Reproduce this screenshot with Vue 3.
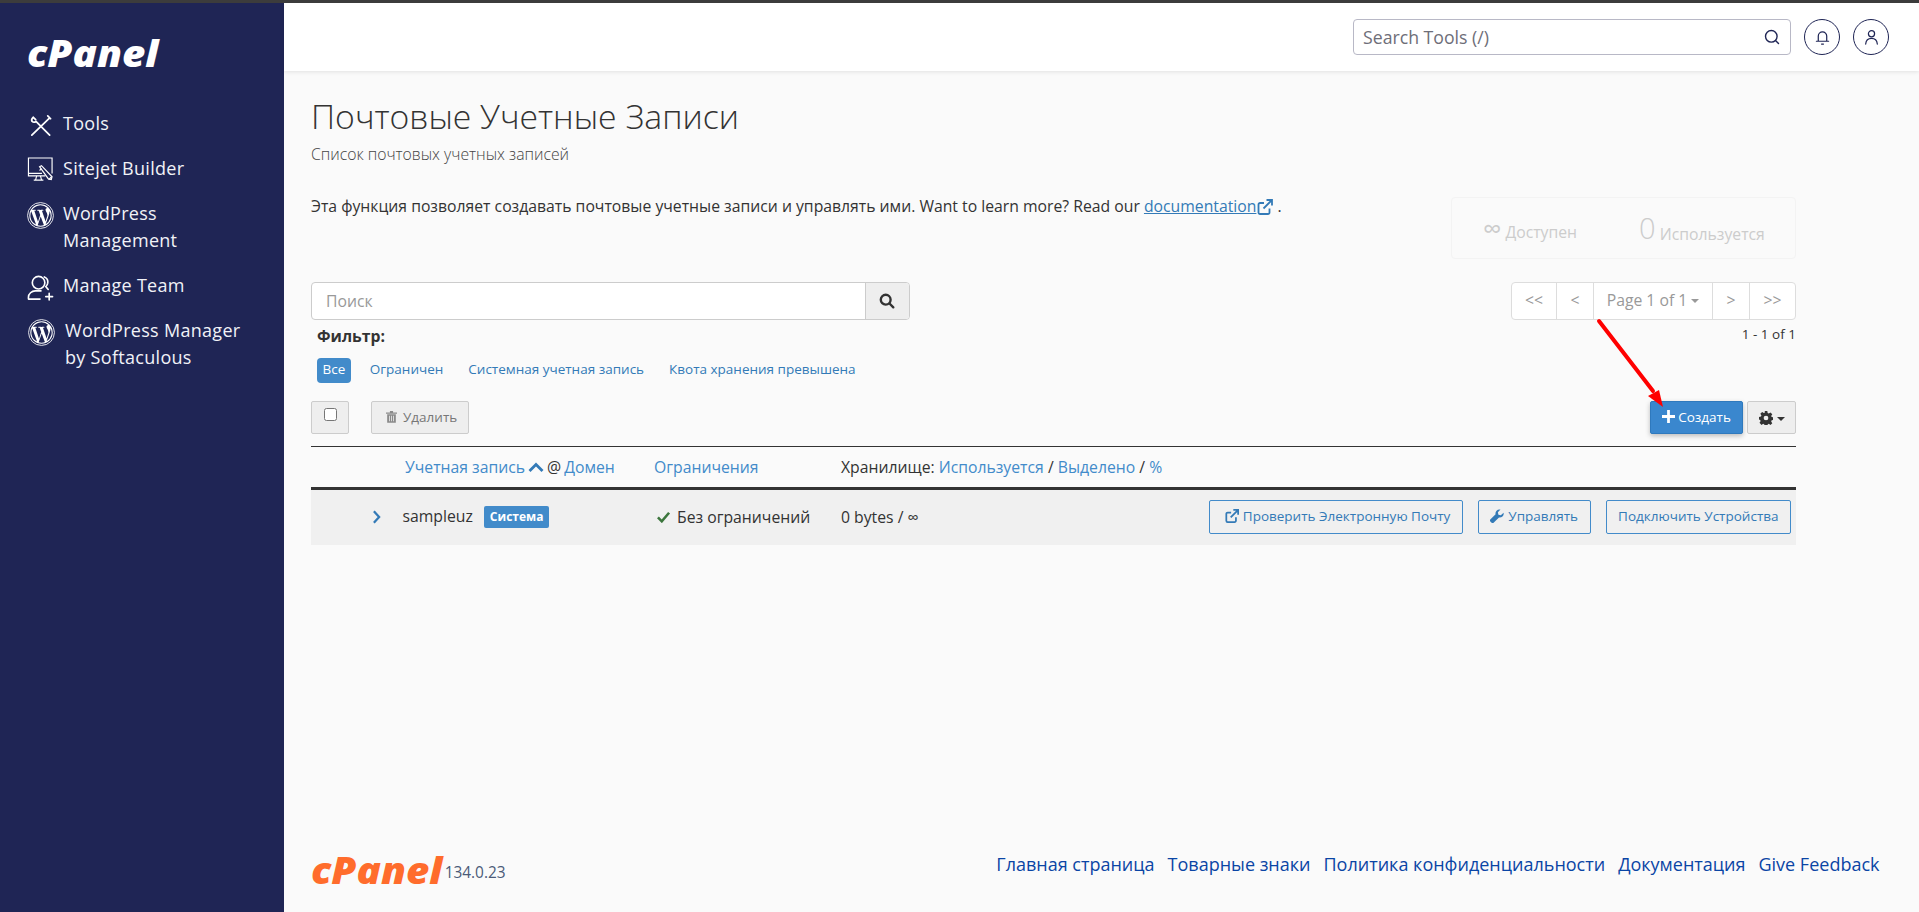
<script setup>
const nav = [
  { id: 'tools', label: 'Tools', icon: 'tools' },
  { id: 'sitejet', label: 'Sitejet Builder', icon: 'sitejet' },
  { id: 'wpm', label: 'WordPress Management', icon: 'wp' },
  { id: 'team', label: 'Manage Team', icon: 'team' },
  { id: 'soft', label: 'WordPress Manager by Softaculous', icon: 'wp', shift: true },
]
const footerLinks = ['Главная страница', 'Товарные знаки', 'Политика конфиденциальности', 'Документация', 'Give Feedback']
const filters = ['Ограничен', 'Системная учетная запись', 'Квота хранения превышена']
</script>

<template>
  <div class="page">
    <aside class="sidebar">
      <div class="logo">cPanel</div>
      <nav class="nav">
        <a v-for="item in nav" :key="item.id" class="nav-item" :class="[item.id, { shift: item.shift }]">
          <span class="nav-icon">
            <svg v-if="item.icon === 'tools'" viewBox="0 0 28 28" width="27" height="27" fill="none" stroke="#fff" stroke-width="1.800" stroke-linecap="round">
              <path d="M5 24 23 6.500M21.500 4l3 3" />
              <path d="M6.500 5.500c-1.600 1.400-2 3-1.200 4.300 1.200 1 2.600 1 4 0L23.500 24" />
              <path d="M6.500 5.500 9 8" />
            </svg>
            <svg v-else-if="item.icon === 'sitejet'" viewBox="0 0 28 28" width="27" height="27" fill="none" stroke="#fff" stroke-width="1.200">
              <path d="M19 19.500H1.500V1H26v16" />
              <path d="M1.500 17h14M10 19.500l-1 4M14 19.500l1 4M7 24h10" />
              <path d="M13 10l2-1 11 11.500-.8 3-3-.8z" fill="#1f2555" />
              <path d="M15 12l-2 2M22.500 23.500l3-3" />
            </svg>
            <svg v-else-if="item.icon === 'wp'" viewBox="0 0 28 28" width="27" height="27">
              <circle cx="14" cy="14" r="13.400" fill="none" stroke="#fff" stroke-width=".9" />
              <circle cx="14" cy="14" r="11.600" fill="#fff" />
              <path fill="#1f2555" d="M3.500 14c0 4.100 2.400 7.700 5.900 9.400L4.400 9.700A10.500 10.500 0 0 0 3.500 14zm17.600-.5c0-1.300-.5-2.200-.9-2.900-.5-.9-1-1.600-1-2.500 0-1 .8-1.900 1.800-1.900h.1A10.500 10.500 0 0 0 5.200 8.200h.7c1.100 0 2.800-.1 2.800-.1.600 0 .6.800.1.900 0 0-.6.100-1.200.1l3.800 11.300 2.300-6.800-1.600-4.500c-.6 0-1.100-.1-1.100-.1-.6 0-.5-.9 0-.9 0 0 1.700.1 2.800.1s2.800-.1 2.800-.1c.6 0 .6.800.1.900 0 0-.6.100-1.200.1l3.800 11.200 1-3.500c.5-1.400.9-2.400.9-3.300zM14.200 15l-3.100 9.100a10.500 10.500 0 0 0 6.500-.2l-.1-.1zm9-6c.1.300.1.700.1 1.100 0 1.100-.2 2.300-.8 3.800l-3.200 9.200A10.500 10.500 0 0 0 23.200 9z" />
            </svg>
            <svg v-else viewBox="0 0 28 28" width="27" height="27" fill="none" stroke="#fff" stroke-width="1.700" stroke-linecap="round">
              <circle cx="12" cy="9" r="6.500" />
              <path d="M18 3c2.500 1 4 3.500 3.500 6.500-.3 1.500-1 2.700-2 3.500l2.500 3" />
              <path d="M1.500 25.500v-1.500c0-3.500 3.500-6.500 7-6.500h6M1.500 26h12M23 20v7M19.500 23.500h7" />
            </svg>
          </span>
          <span class="nav-label">{{ item.label }}</span>
        </a>
      </nav>
    </aside>

    <div class="main">
      <header class="topbar">
        <div class="tool-search">
          <span class="tool-placeholder">Search Tools (/)</span>
          <svg viewBox="0 0 16 16" width="16" height="16" fill="none" stroke="#1f2555" stroke-width="1.400" stroke-linecap="round">
            <circle cx="7.300" cy="7.300" r="5.800" /><path d="M11.500 11.500l3 3" />
          </svg>
        </div>
        <button class="round-btn" aria-label="Notifications">
          <svg viewBox="0 0 16 18" width="15" height="17" fill="none" stroke="#1f2555" stroke-width="1.300" stroke-linecap="round">
            <path d="M1.500 13h13M3.500 13V7.500a4.500 4.500 0 0 1 9 0V13M7 16h2" />
          </svg>
        </button>
        <button class="round-btn" aria-label="User">
          <svg viewBox="0 0 16 18" width="15" height="17" fill="none" stroke="#1f2555" stroke-width="1.300" stroke-linecap="round">
            <circle cx="8" cy="5" r="3.300" /><path d="M1.800 16c.3-3.500 2.800-6 6.200-6s5.900 2.500 6.200 6" />
          </svg>
        </button>
      </header>

      <main class="content">
        <h1 class="title">Почтовые Учетные Записи</h1>
        <p class="subtitle">Список почтовых учетных записей</p>

        <div class="intro">
          <p class="intro-text">
            Эта функция позволяет создавать почтовые учетные записи и управлять ими. Want to learn more? Read our
            <a class="doc-link">documentation</a>
            <svg class="ext" viewBox="0 0 16 16" width="16" height="16" fill="none" stroke="#337ab7" stroke-width="1.800">
              <path d="M12.500 9.500v4a1.500 1.500 0 0 1-1.500 1.500H3a1.500 1.500 0 0 1-1.500-1.500V5.500A1.500 1.500 0 0 1 3 4h4" />
              <path d="M6.500 9.500 14.500 1.500M9.500 1h5.500v5.500" />
            </svg>
            .
          </p>
          <div class="stats">
            <span class="stat"><span class="stat-inf">∞</span> Доступен</span>
            <span class="stat"><span class="stat-num">0</span> Используется</span>
          </div>
        </div>

        <div class="search-row">
          <div class="search-box">
            <span class="search-input">Поиск</span>
            <span class="search-btn">
              <svg viewBox="0 0 16 16" width="16" height="16" fill="none" stroke="#333" stroke-width="2.400" stroke-linecap="round">
                <circle cx="6.700" cy="6.700" r="4.900" /><path d="M10.500 10.500l3.800 3.800" />
              </svg>
            </span>
          </div>
          <div class="pager-wrap">
            <div class="pager">
              <span class="pg w45">&lt;&lt;</span>
              <span class="pg w37">&lt;</span>
              <span class="pg w119">Page 1 of 1<i class="caret"></i></span>
              <span class="pg w37">&gt;</span>
              <span class="pg w46">&gt;&gt;</span>
            </div>
            <div class="pager-info">1 - 1 of 1</div>
          </div>
        </div>

        <div class="filter-label">Фильтр:</div>
        <div class="filters">
          <span class="pill">Все</span>
          <a v-for="f in filters" :key="f" class="filter">{{ f }}</a>
        </div>

        <div class="actions">
          <span class="btn-check"><i class="box"></i></span>
          <span class="btn-del">
            <svg viewBox="0 0 14 16" width="11" height="13" fill="#8a8a8a">
              <path d="M0 3h14v1.500H0zM5 1h4v2H5zM1.500 5h11v11h-11zM4 7v7h1V7zm2.500 0v7h1V7zM9 7v7h1V7z" fill-rule="evenodd" />
            </svg>
            Удалить
          </span>
          <span class="spacer"></span>
          <span class="btn-create">
            <svg viewBox="0 0 14 14" width="13" height="13" fill="#fff"><path d="M5.500 0h3v5.500H14v3H8.500V14h-3V8.500H0v-3h5.500z" /></svg>
            Создать
          </span>
          <span class="btn-gear">
            <svg viewBox="0 0 16 16" width="14" height="14">
              <path fill="#333" fill-rule="evenodd" d="M6.500 0h3l.4 2.200 1.300.6 1.900-1.200 2.100 2.100-1.300 1.900.6 1.300 2.200.4v3l-2.200.4-.6 1.300 1.300 1.900-2.100 2.100-1.900-1.300-1.300.6-.4 2.200h-3l-.4-2.200-1.300-.6-1.900 1.300L.600 13.400l1.300-1.900-.6-1.300L0 9.800v-3l2.200-.4.600-1.300L1.500 3.200l2.100-2.100 1.900 1.200 1.300-.6zM8 5.300a2.700 2.700 0 1 0 0 5.400 2.700 2.700 0 0 0 0-5.400z" />
            </svg>
            <i class="caret dark"></i>
          </span>
        </div>

        <div class="thead">
          <div class="c-name">
            <a>Учетная запись</a>
            <svg viewBox="0 0 16 10" width="16" height="10" fill="none" stroke="#337ab7" stroke-width="2.800"><path d="M1.500 9 8 2.500 14.500 9" /></svg>
            <span>@</span>
            <a>Домен</a>
          </div>
          <div class="c-limit"><a>Ограничения</a></div>
          <div class="c-store">Хранилище: <a>Используется</a> / <a>Выделено</a> / <a>%</a></div>
        </div>

        <div class="row">
          <span class="c-toggle">
            <svg viewBox="0 0 10 16" width="9" height="14" fill="none" stroke="#337ab7" stroke-width="2.600"><path d="M2 1.500 8 8l-6 6.500" /></svg>
          </span>
          <div class="r-name">
            <span>sampleuz</span>
            <span class="badge">Система</span>
          </div>
          <div class="r-limit">
            <svg viewBox="0 0 16 14" width="17" height="12" fill="none" stroke="#3c763d" stroke-width="3"><path d="M1.500 7.500 6 12 14.500 2" /></svg>
            Без ограничений
          </div>
          <div class="r-store">0 bytes / ∞</div>
          <div class="r-actions">
            <a class="outline check-mail">
              <svg viewBox="0 0 16 16" width="14" height="14" fill="none" stroke="#337ab7" stroke-width="2">
                <path d="M12.500 9.500v4a1.500 1.500 0 0 1-1.500 1.500H3a1.500 1.500 0 0 1-1.500-1.500V5.500A1.500 1.500 0 0 1 3 4h4" />
                <path d="M6.500 9.500 14.500 1.500M9.500 1h5.500v5.500" />
              </svg>
              Проверить Электронную Почту
            </a>
            <a class="outline">
              <svg viewBox="0 0 16 16" width="14" height="14" fill="#337ab7">
                <path d="M15.500 4.200c.4 1.600-.1 3.300-1.300 4.400-1.100 1-2.500 1.400-3.900 1.100L4.400 15.500a1.900 1.900 0 0 1-2.800 0l-1-1a1.900 1.900 0 0 1 0-2.800L6.400 6C6 4.500 6.400 3 7.500 1.900 8.700.700 10.400.200 12 .700L9 3.700l.6 2.800 2.800.6z" />
              </svg>
              Управлять
            </a>
            <a class="outline">Подключить Устройства</a>
          </div>
        </div>

        <svg class="arrow" viewBox="0 0 74 94" width="74" height="94">
          <path d="M4 4 58 74" stroke="#f00" stroke-width="4" stroke-linecap="round" fill="none" />
          <path d="M68 90 53 79 64 73z" fill="#f00" />
        </svg>
      </main>

      <footer class="footer">
        <div class="foot-brand">
          <span class="logo-foot">cPanel</span>
          <span class="version">134.0.23</span>
        </div>
        <div class="foot-links">
          <a v-for="l in footerLinks" :key="l">{{ l }}</a>
        </div>
      </footer>
    </div>
  </div>
</template>

<style>
html, body { margin: 0; padding: 0; background: #fafafa; }
</style>

<style scoped>
* { box-sizing: border-box; }
.page {
  display: flex;
  height: 912px;
  overflow: hidden;
  border-top: 3px solid #3c3c3c;
  font-family: "Open Sans", "Noto Sans", sans-serif;
  font-size: 15.750px;
  color: #333;
  background: #fafafa;
}
.sidebar {
  width: 284px;
  flex: none;
  background: #1f2555;
  color: #fff;
  padding: 31px 0 0 27px;
}
.logo, .logo-foot {
  display: block;
  font-family: "Open Sans", sans-serif;
  font-weight: 800;
  font-style: italic;
  font-size: 37px;
  line-height: 37px;
  transform: scaleX(1.09);
  transform-origin: left center;
}
.logo { height: 38px; }
.nav { margin-top: 37.500px; display: flex; flex-direction: column; }
.nav-item { display: flex; gap: 9px; margin-bottom: 18px; color: #f1f2f7; font-size: 18px; line-height: 27px; letter-spacing: .3px; }
.nav-item.shift { padding-left: 1px; gap: 10px; }
.nav-icon { width: 27px; height: 27px; margin: 2px 0 -2px; flex: none; display: block; }
.nav-icon svg { display: block; }
.nav-label { flex: 1; padding-right: 28px; }

.main { flex: 1; min-width: 0; display: flex; flex-direction: column; }
.topbar {
  height: 68px;
  flex: none;
  background: #fff;
  box-shadow: 0 1px 4px rgba(0, 0, 0, .1);
  display: flex;
  align-items: center;
  justify-content: flex-end;
  gap: 13px;
  padding: 0 30px 0 0;
  position: relative;
}
.tool-search {
  width: 438px;
  height: 36px;
  border: 1px solid #b8b8c6;
  border-radius: 4px;
  display: flex;
  align-items: center;
  justify-content: space-between;
  padding: 0 10px 0 9px;
}
.tool-placeholder { font-size: 17.700px; color: #6e6e78; }
.round-btn {
  width: 36px;
  height: 36px;
  padding: 0;
  background: #fff;
  border: 1px solid #1f2555;
  border-radius: 50%;
  display: flex;
  align-items: center;
  justify-content: center;
}

.content { position: relative; flex: 1; padding: 23px 123px 0 27px; }
.title { margin: 0; font-weight: 300; font-size: 33.750px; line-height: 44px; color: #333; }
.subtitle { margin: 6px 0 0; font-weight: 300; line-height: 20px; color: #444; }
.intro { display: flex; justify-content: space-between; margin-top: 33px; height: 85px; }
.intro-text { margin: -1px 0 0; line-height: 20px; }
.doc-link { color: #337ab7; text-decoration: underline; }
.ext { vertical-align: -3px; margin-left: 1px; }
.stats {
  width: 345px;
  height: 62px;
  border: 1px solid #f3f3f3;
  border-radius: 4px;
  display: flex;
  align-items: center;
  gap: 62px;
  padding: 1px 0 0 31px;
  color: #ccc;
}
.stat { white-space: nowrap; }
.stat-inf { font-size: 26px; line-height: 1; }
.stat-num { font-size: 29px; font-weight: 300; line-height: 1; vertical-align: 1px; }

.search-row { display: flex; justify-content: space-between; align-items: flex-start; }
.search-box {
  width: 598.500px;
  height: 38px;
  border: 1px solid #ccc;
  border-radius: 4px;
  background: #fff;
  display: flex;
  align-items: stretch;
}
.search-input { flex: 1; padding: 8px 14px; line-height: 20px; color: #999; }
.search-btn { width: 44px; border-left: 1px solid #ccc; background: #eee; border-radius: 0 3px 3px 0; display: flex; align-items: center; justify-content: center; }
.pager-wrap { text-align: right; }
.pager { display: flex; height: 38px; border: 1px solid #ddd; border-radius: 4px; background: #fff; color: #999; }
.pg { display: flex; align-items: center; justify-content: center; padding-bottom: 2px; border-left: 1px solid #ddd; white-space: nowrap; }
.pg:first-child { border-left: 0; }
.w45 { width: 44px; }
.w37 { width: 37px; }
.w119 { width: 119px; }
.w46 { width: 46px; }
.caret { display: inline-block; width: 0; height: 0; margin: 2px 0 0 4px; border-left: 4px solid transparent; border-right: 4px solid transparent; border-top: 4px solid #999; }
.caret.dark { border-top-color: #333; }
.pager-info { font-size: 13.500px; line-height: 18px; margin-top: 5px; }

.filter-label { margin: -17px 0 0 6px; font-weight: 700; line-height: 20px; height: 20px; }
.filters { display: flex; align-items: center; margin: 12px 0 0 6px; font-size: 13.500px; gap: 25px; height: 25px; line-height: 23px; }
.pill { background: #428bca; color: #fff; border-radius: 4px; padding: 0 5.500px; height: 25px; margin-right: -6px; }
.filter { color: #337ab7; margin-top: -2px; }

.actions { display: flex; align-items: stretch; height: 33px; margin-top: 18px; font-size: 13.500px; }
.btn-check { width: 38px; background: #eee; border: 1px solid #ccc; border-radius: 2px; display: flex; justify-content: center; padding-top: 6px; }
.box { width: 13px; height: 13px; display: block; background: #fff; border: 1px solid #767676; border-radius: 2.500px; }
.btn-del { margin-left: 22px; width: 98px; padding: 0 0 2px 14px; background: #eee; border: 1px solid #ccc; border-radius: 2px; color: #777; display: flex; align-items: center; gap: 6px; }
.spacer { flex: 1; }
.btn-create { width: 93px; padding-bottom: 2px; background: #3a87ce; color: #fff; border-radius: 2px; border: 1px solid #2f79bd; box-shadow: 0 2px 5px rgba(0, 0, 0, .25); display: flex; align-items: center; justify-content: center; gap: 3px; }
.btn-gear { width: 49px; margin-left: 4px; background: #eee; border: 1px solid #ccc; border-radius: 2px; display: flex; align-items: center; justify-content: center; }

.thead { display: flex; align-items: center; height: 44px; margin-top: 12px; border-top: 1px solid #333; border-bottom: 3px solid #333; padding-left: 94px; }
.thead a { color: #428bca; }
.c-name { width: 249px; white-space: nowrap; display: flex; align-items: center; gap: 3px; }
.c-limit { width: 187px; }

.row { display: flex; align-items: center; height: 55px; background: #f0f0f0; padding: 0 0 2px 61px; }
.c-toggle { width: 30.500px; height: 16px; display: flex; align-items: center; }
.r-name { width: 252.500px; display: flex; align-items: center; gap: 11px; margin-top: -1px; }
.r-limit { width: 186px; display: flex; align-items: center; gap: 5px; }
.r-store { flex: 1; }
.badge { background: #428bca; color: #fff; font-weight: 700; font-size: 12px; border-radius: 2px; line-height: 21px; height: 22px; padding: 0 6px; margin-top: 2px; }
.r-actions { display: flex; gap: 15px; padding-right: 5px; font-size: 13.500px; }
.outline { display: flex; align-items: center; gap: 4px; height: 34px; padding: 0 11.500px 2px; border: 1px solid #428bca; border-radius: 2px; color: #337ab7; white-space: nowrap; }
.outline.check-mail { padding-left: 15px; }

.arrow { position: absolute; left: 1311px; top: 246px; pointer-events: none; }

.footer { display: flex; justify-content: space-between; align-items: flex-start; height: 62px; padding: 0 39.500px 0 27px; flex: none; }
.foot-brand { display: flex; align-items: flex-start; margin-top: 1px; }
.logo-foot { color: #ff6c2c; }
.version { font-size: 15.400px; color: #4a5a78; line-height: 22px; margin: 11px 0 0 13px; }
.foot-links { display: flex; gap: 13px; font-size: 18px; line-height: 24px; margin-top: 2px; color: #0a45a5; }
</style>
